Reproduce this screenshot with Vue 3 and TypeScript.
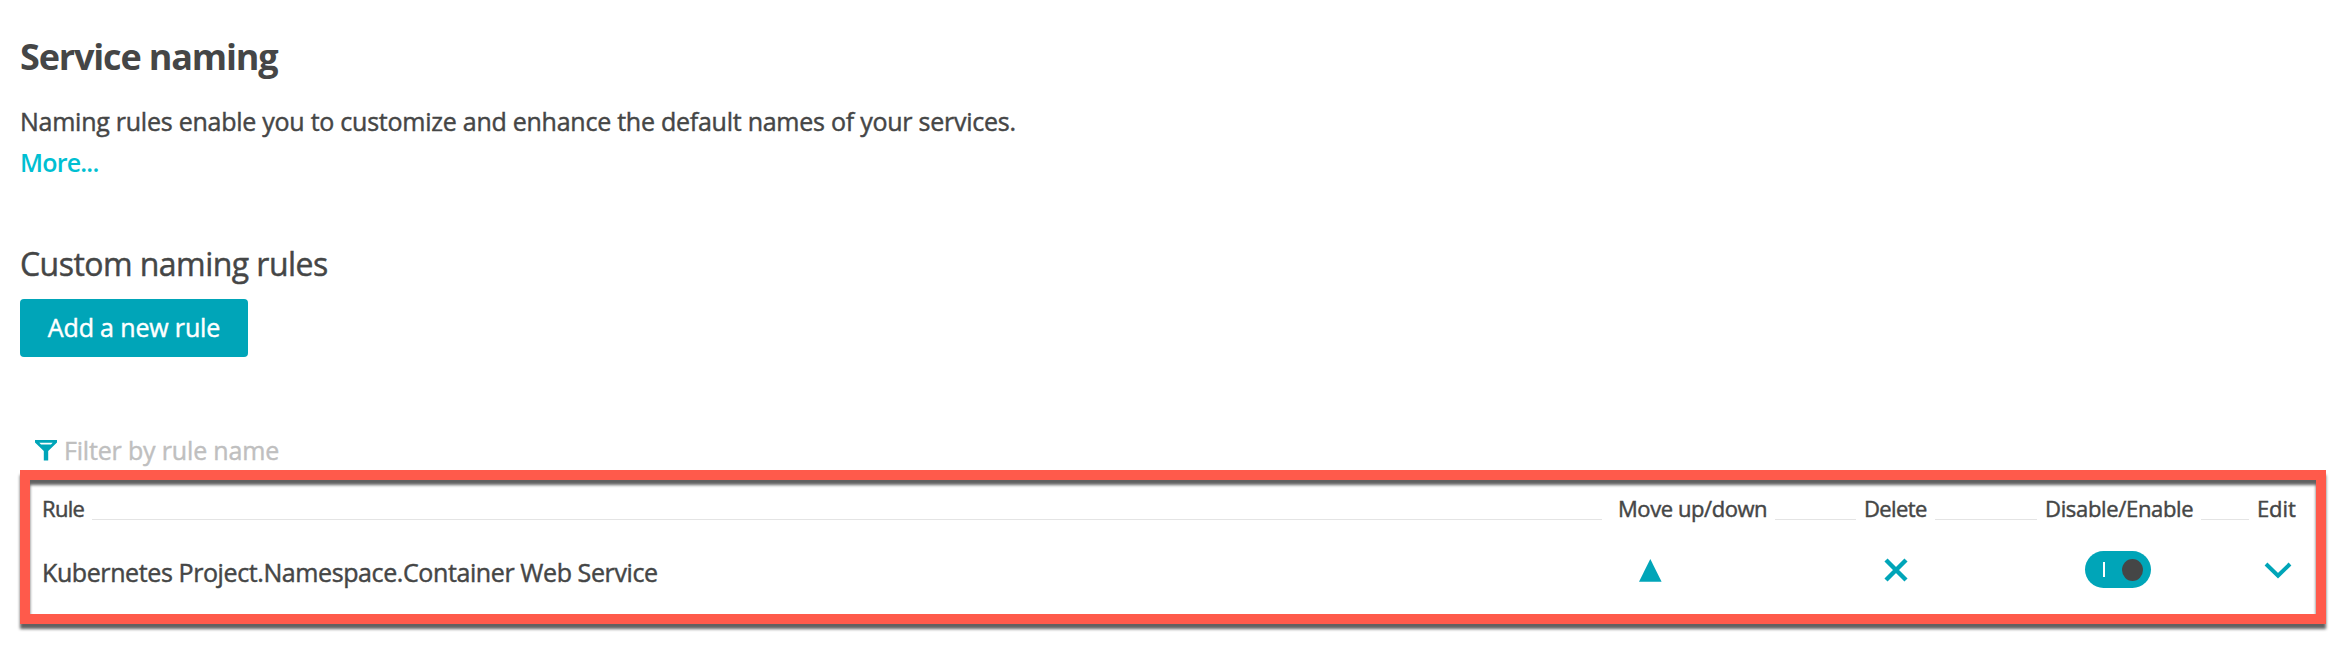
<script setup lang="ts">
import { ref } from 'vue'

interface Rule {
  id: number
  name: string
  enabled: boolean
}

const filter = ref('')
const rules = ref<Rule[]>([
  { id: 1, name: 'Kubernetes Project.Namespace.Container Web Service', enabled: true },
])
</script>

<template>
  <main class="page">
    <h1>Service naming</h1>
    <p class="intro">Naming rules enable you to customize and enhance the default names of your services.</p>
    <a class="more">More...</a>

    <h2>Custom naming rules</h2>
    <button class="add" type="button">Add a new rule</button>

    <label class="filter">
      <svg width="22" height="21" viewBox="0 0 22 21">
        <path fill="#00a5b8" fill-rule="evenodd" d="M0 0H22V2.5L13.2 11V20.5H8.8V11L0 2.5ZM4.3 2.8L6 4.6H16L17.7 2.8Z" />
      </svg>
      <input v-model="filter" placeholder="Filter by rule name" />
    </label>

    <section class="table">
      <div class="row head">
        <div class="cell first"><span class="c-rule">Rule</span><i /></div>
        <div class="cell move"><span class="c-move">Move up/down</span><i /></div>
        <div class="cell delete"><span class="c-delete">Delete</span><i /></div>
        <div class="cell toggle-col"><span class="c-toggle">Disable/Enable</span><i /></div>
        <div class="cell edit"><span class="c-edit">Edit</span></div>
      </div>
      <div v-for="rule in rules" :key="rule.id" class="row body">
        <div class="cell first"><span class="name">{{ rule.name }}</span></div>
        <div class="cell move">
          <svg class="up" width="23" height="23" viewBox="0 0 23 23"><path fill="#00a5b8" d="M11.3 0L22.6 22.8H0Z" /></svg>
        </div>
        <div class="cell delete">
          <svg class="cross" width="24" height="24" viewBox="0 0 24 24"><path fill="none" stroke="#00a5b8" stroke-width="4.4" d="M2 2L22 22M22 2L2 22" /></svg>
        </div>
        <div class="cell toggle-col">
          <button type="button" class="switch" @click="rule.enabled = !rule.enabled"><b /><em /></button>
        </div>
        <div class="cell edit">
          <svg class="chevron" width="28" height="17" viewBox="0 0 28 17"><path fill="none" stroke="#00a5b8" stroke-width="4" d="M2 2L14 13.6L26 2" /></svg>
        </div>
      </div>
    </section>
  </main>
</template>

<style>
body {
  background: #fff;
}
</style>

<style scoped>
.page {
  box-sizing: border-box;
  width: 2332px;
  height: 666px;
  padding: 37px 6px 0 20px;
  overflow: hidden;
  color: #454646;
  background: #fff;
  font-family: 'Open Sans', 'Noto Sans', sans-serif;
  font-size: 25px;
  line-height: 40px;
  white-space: nowrap;
  -webkit-text-stroke: 0.45px currentColor;
}
h1,
h2,
p {
  margin: 0;
}
h1 {
  height: 64px;
  font-size: 36px;
  font-weight: 700;
  letter-spacing: -1.17px;
  -webkit-text-stroke: 0;
}
.intro {
  height: 41px;
  letter-spacing: -0.25px;
}
.more {
  display: block;
  height: 102px;
  color: #00bfd2;
  font-weight: 600;
  letter-spacing: -0.8px;
  -webkit-text-stroke: 0;
}
h2 {
  height: 55px;
  font-size: 32px;
  font-weight: 400;
  letter-spacing: -0.55px;
}
.add {
  display: block;
  width: 228px;
  height: 58px;
  padding: 0 0 2px;
  border: 0;
  border-radius: 4px;
  color: #fff;
  background: #00a5b8;
  font: inherit;
  letter-spacing: -0.15px;
}
.filter {
  display: flex;
  align-items: center;
  height: 40px;
  margin-top: 73px;
  padding-left: 15px;
}
.filter input {
  width: 400px;
  height: 40px;
  margin-left: 7px;
  padding: 0 0 1px;
  box-sizing: border-box;
  border: 0;
  outline: 0;
  font: inherit;
  letter-spacing: -0.17px;
}
.filter input::placeholder {
  color: #bfbfbf;
  opacity: 1;
  -webkit-text-stroke: 0.45px #bfbfbf;
}
.table {
  position: relative;
  box-sizing: border-box;
  height: 154px;
  padding: 25px 22px 0;
}
.table::after {
  content: '';
  position: absolute;
  inset: 0;
  border: 10px solid #ff5a4b;
  filter: drop-shadow(0 5px 1.5px rgba(0, 0, 0, 0.62));
  pointer-events: none;
}
.row {
  display: grid;
  grid-template-columns: 1576px 246px 181px 212px 1fr;
}
.cell {
  display: flex;
  align-items: center;
}
.head {
  height: 26px;
  font-size: 22px;
  line-height: 26px;
}
.head span {
  height: 28px;
}
.head i {
  flex: 1;
  height: 1px;
  margin: 21px 8px 0;
  background: #e4e4e4;
}
.head .first i {
  margin-right: 16px;
}
.c-rule {
  letter-spacing: -0.7px;
}
.c-move {
  letter-spacing: -0.43px;
}
.c-delete {
  letter-spacing: -0.6px;
}
.c-toggle {
  letter-spacing: -0.33px;
}
.c-edit {
  letter-spacing: -0.1px;
}
.body {
  height: 46px;
  margin-top: 26px;
}
.name {
  padding-top: 4px;
  letter-spacing: -0.4px;
}
.up {
  margin-left: 21px;
}
.cross {
  margin-left: 20px;
}
.switch {
  display: flex;
  align-items: center;
  width: 66px;
  height: 37px;
  margin: 0 0 1px 40px;
  padding: 0 8px 0 18px;
  border: 0;
  border-radius: 19px;
  background: #00a5b8;
}
.switch b {
  width: 2px;
  height: 15px;
  margin-right: auto;
  background: #fff;
}
.switch em {
  width: 21px;
  height: 22px;
  border-radius: 50%;
  background: #454646;
}
.chevron {
  margin-left: 7px;
}
</style>
